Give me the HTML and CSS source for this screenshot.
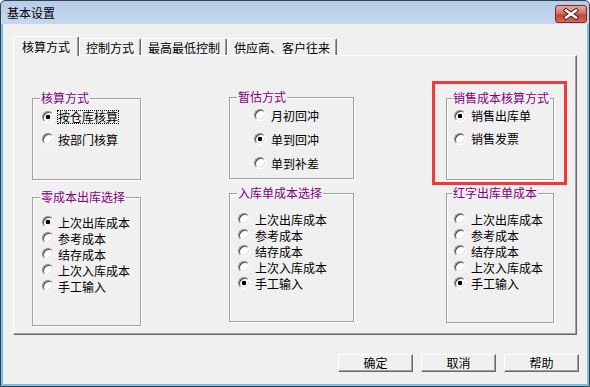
FILE: index.html
```html
<!DOCTYPE html>
<html lang="zh-CN">
<head>
    <meta charset="UTF-8">
    <title>基本设置</title>
    <link rel="stylesheet" href="styles.css">
</head>
<body>
    <div class="window">
        <div class="titlebar">
            <span class="title">基本设置</span>
            <span class="close-btn">
                <svg width="32" height="18" viewBox="0 0 32 18">
                    <path d="M11 5.5 L21 12.5 M21 5.5 L11 12.5" stroke="#4a1c1c" stroke-width="4.4" stroke-linecap="square"/>
                    <path d="M11 5.5 L21 12.5 M21 5.5 L11 12.5" stroke="#fff" stroke-width="2.4" stroke-linecap="square"/>
                </svg>
            </span>
        </div>

        <div class="client">
            <div class="tabs">
                <div class="tab active">核算方式</div>
                <div class="tab">控制方式</div>
                <div class="tab">最高最低控制</div>
                <div class="tab">供应商、客户往来</div>
            </div>

            <div class="panel">
                <div class="col col-1">
                    <div class="group box-calc">
                        <div class="legend">核算方式</div>
                        <div class="opts">
                            <div class="opt"><span class="radio checked"></span><span class="focus">按仓库核算</span></div>
                            <div class="opt"><span class="radio"></span><span>按部门核算</span></div>
                        </div>
                    </div>
                    <div class="group box-zero">
                        <div class="legend">零成本出库选择</div>
                        <div class="opts">
                            <div class="opt"><span class="radio checked"></span><span>上次出库成本</span></div>
                            <div class="opt"><span class="radio"></span><span>参考成本</span></div>
                            <div class="opt"><span class="radio"></span><span>结存成本</span></div>
                            <div class="opt"><span class="radio"></span><span>上次入库成本</span></div>
                            <div class="opt"><span class="radio"></span><span>手工输入</span></div>
                        </div>
                    </div>
                </div>

                <div class="col col-2">
                    <div class="group box-temp">
                        <div class="legend">暂估方式</div>
                        <div class="opts">
                            <div class="opt"><span class="radio"></span><span>月初回冲</span></div>
                            <div class="opt"><span class="radio checked"></span><span>单到回冲</span></div>
                            <div class="opt"><span class="radio"></span><span>单到补差</span></div>
                        </div>
                    </div>
                    <div class="group box-in">
                        <div class="legend">入库单成本选择</div>
                        <div class="opts">
                            <div class="opt"><span class="radio"></span><span>上次出库成本</span></div>
                            <div class="opt"><span class="radio"></span><span>参考成本</span></div>
                            <div class="opt"><span class="radio"></span><span>结存成本</span></div>
                            <div class="opt"><span class="radio"></span><span>上次入库成本</span></div>
                            <div class="opt"><span class="radio checked"></span><span>手工输入</span></div>
                        </div>
                    </div>
                </div>

                <div class="col col-3">
                    <div class="group box-sale">
                        <div class="legend">销售成本核算方式</div>
                        <div class="opts">
                            <div class="opt"><span class="radio checked"></span><span>销售出库单</span></div>
                            <div class="opt"><span class="radio"></span><span>销售发票</span></div>
                        </div>
                    </div>
                    <div class="group box-red">
                        <div class="legend">红字出库单成本</div>
                        <div class="opts">
                            <div class="opt"><span class="radio"></span><span>上次出库成本</span></div>
                            <div class="opt"><span class="radio"></span><span>参考成本</span></div>
                            <div class="opt"><span class="radio"></span><span>结存成本</span></div>
                            <div class="opt"><span class="radio"></span><span>上次入库成本</span></div>
                            <div class="opt"><span class="radio checked"></span><span>手工输入</span></div>
                        </div>
                    </div>
                </div>

                <div class="highlight"></div>
            </div>

            <div class="actions">
                <button>确定</button>
                <button>取消</button>
                <button>帮助</button>
            </div>
        </div>
    </div>
</body>
</html>
```

FILE: styles.css
```css
body {
    margin: 0;
    font-family: "Noto Sans CJK SC", "Liberation Sans", sans-serif;
    font-size: 12px;
    color: #000;
    background: #fff;
}
.window {
    width: 590px;
    height: 387px;
    box-sizing: border-box;
    border: 1px solid #34414f;
    border-radius: 5px 5px 0 0;
    background: linear-gradient(#b6cce8, #c5d8ed 23px, #7cbfe6 23px);
    display: flex;
    flex-direction: column;
}
.titlebar {
    height: 23px;
    display: flex;
    justify-content: space-between;
    align-items: flex-start;
    padding-left: 6px;
}
.title {
    line-height: 12px;
    margin-top: 6px;
}
.close-btn {
    width: 32px;
    height: 18px;
    margin: 4px 2px 0 0;
    box-sizing: border-box;
    border: 1px solid #7a2a2a;
    border-radius: 3px;
    background: linear-gradient(#e8a99c, #d47565 45%, #c0443a 55%, #d06a55);
    display: flex;
    align-items: center;
    justify-content: center;
    overflow: hidden;
}
.close-btn svg {
    flex: none;
}
.client {
    flex: 1;
    margin: 0 2px 2px;
    background: #f0f0f0;
    padding: 12px 8px 0 10px;
    display: flex;
    flex-direction: column;
}
.tabs {
    display: flex;
    align-items: flex-end;
    height: 19px;
}
.tab {
    height: 17px;
    box-sizing: border-box;
    padding: 1px 6px 0;
    line-height: 15px;
    border: 1px solid #fff;
    border-bottom: none;
    border-right-color: #696969;
    border-radius: 2px 2px 0 0;
    box-shadow: inset -1px 0 0 #a0a0a0;
    background: #f0f0f0;
}
.tab.active {
    height: 20px;
    padding: 2px 8px 0;
    margin-bottom: -1px;
    position: relative;
    z-index: 1;
}
.panel {
    position: relative;
    height: 280px;
    margin-right: 2px;
    box-sizing: border-box;
    border: 1px solid;
    border-color: #fff #696969 #696969 #fff;
    box-shadow: inset -1px -1px 0 #a0a0a0;
    padding-left: 18px;
    display: flex;
    align-items: flex-start;
}
.col {
    display: flex;
    flex-direction: column;
}
.col-1 {
    width: 109px;
    padding-top: 42px;
    gap: 17px;
}
.col-2 {
    width: 125px;
    margin-left: 88px;
    padding-top: 41px;
    gap: 14px;
}
.col-3 {
    width: 108px;
    margin-left: 92px;
    padding-top: 42px;
    gap: 13px;
}
.group {
    box-sizing: border-box;
    border: 1px solid #a0a0a0;
    box-shadow: inset 1px 1px 0 #fff, 1px 1px 0 #fff;
}
.legend {
    width: fit-content;
    height: 12px;
    line-height: 12px;
    margin: -7px 0 0 7px;
    padding: 0 1px;
    background: #f0f0f0;
    color: #800080;
    white-space: nowrap;
}
.opts {
    display: flex;
    flex-direction: column;
}
.opt {
    display: flex;
    align-items: center;
    gap: 4px;
    white-space: nowrap;
}
.radio {
    flex: none;
    width: 12px;
    height: 12px;
    box-sizing: border-box;
    border-radius: 50%;
    border: 1px solid;
    border-color: #8a8a8a #fff #fff #8a8a8a;
    box-shadow: inset 1px 1px 0 #505050, inset -1px -1px 0 #dcdcdc;
    background: #fff;
}
.radio.checked {
    background: radial-gradient(circle, #000 2px, #fff 2.6px);
}
.focus {
    border: 1px dotted #000;
    line-height: 12px;
    margin-left: -1px;
}

.box-calc { height: 82px; }
.box-calc .opts { padding: 2px 0 0 9px; }
.box-calc .opt { height: 22px; }

.box-temp { height: 82px; }
.box-temp .opts { padding-left: 24px; }
.box-temp .opt { height: 24px; gap: 5px; }

.box-sale { height: 82px; }
.box-sale .legend { margin-left: 5px; }
.box-sale .opts { padding-left: 7px; }
.box-sale .opt { height: 23px; gap: 5px; }

.box-zero { height: 129px; }
.box-zero .opts { padding: 11px 0 0 9px; }
.box-zero .opt { height: 16px; }

.box-in { height: 129px; }
.box-in .opts { padding: 12px 0 0 8px; }
.box-in .opt { height: 16px; gap: 5px; }

.box-red { height: 130px; }
.box-red .legend { margin-left: 5px; }
.box-red .opts { padding: 12px 0 0 7px; }
.box-red .opt { height: 16px; gap: 5px; }

.highlight {
    position: absolute;
    left: 418px;
    top: 25px;
    width: 135px;
    height: 104px;
    box-sizing: border-box;
    border: 3px solid #f0393b;
}
.actions {
    display: flex;
    justify-content: flex-end;
    gap: 8px;
    margin-top: 19px;
}
button {
    width: 75px;
    height: 18px;
    padding: 0;
    box-sizing: border-box;
    font-family: inherit;
    font-size: 12px;
    line-height: 14px;
    color: #000;
    background: #f0f0f0;
    border: 1px solid;
    border-color: #fff #696969 #696969 #fff;
    box-shadow: inset -1px -1px 0 #a0a0a0;
}
```
